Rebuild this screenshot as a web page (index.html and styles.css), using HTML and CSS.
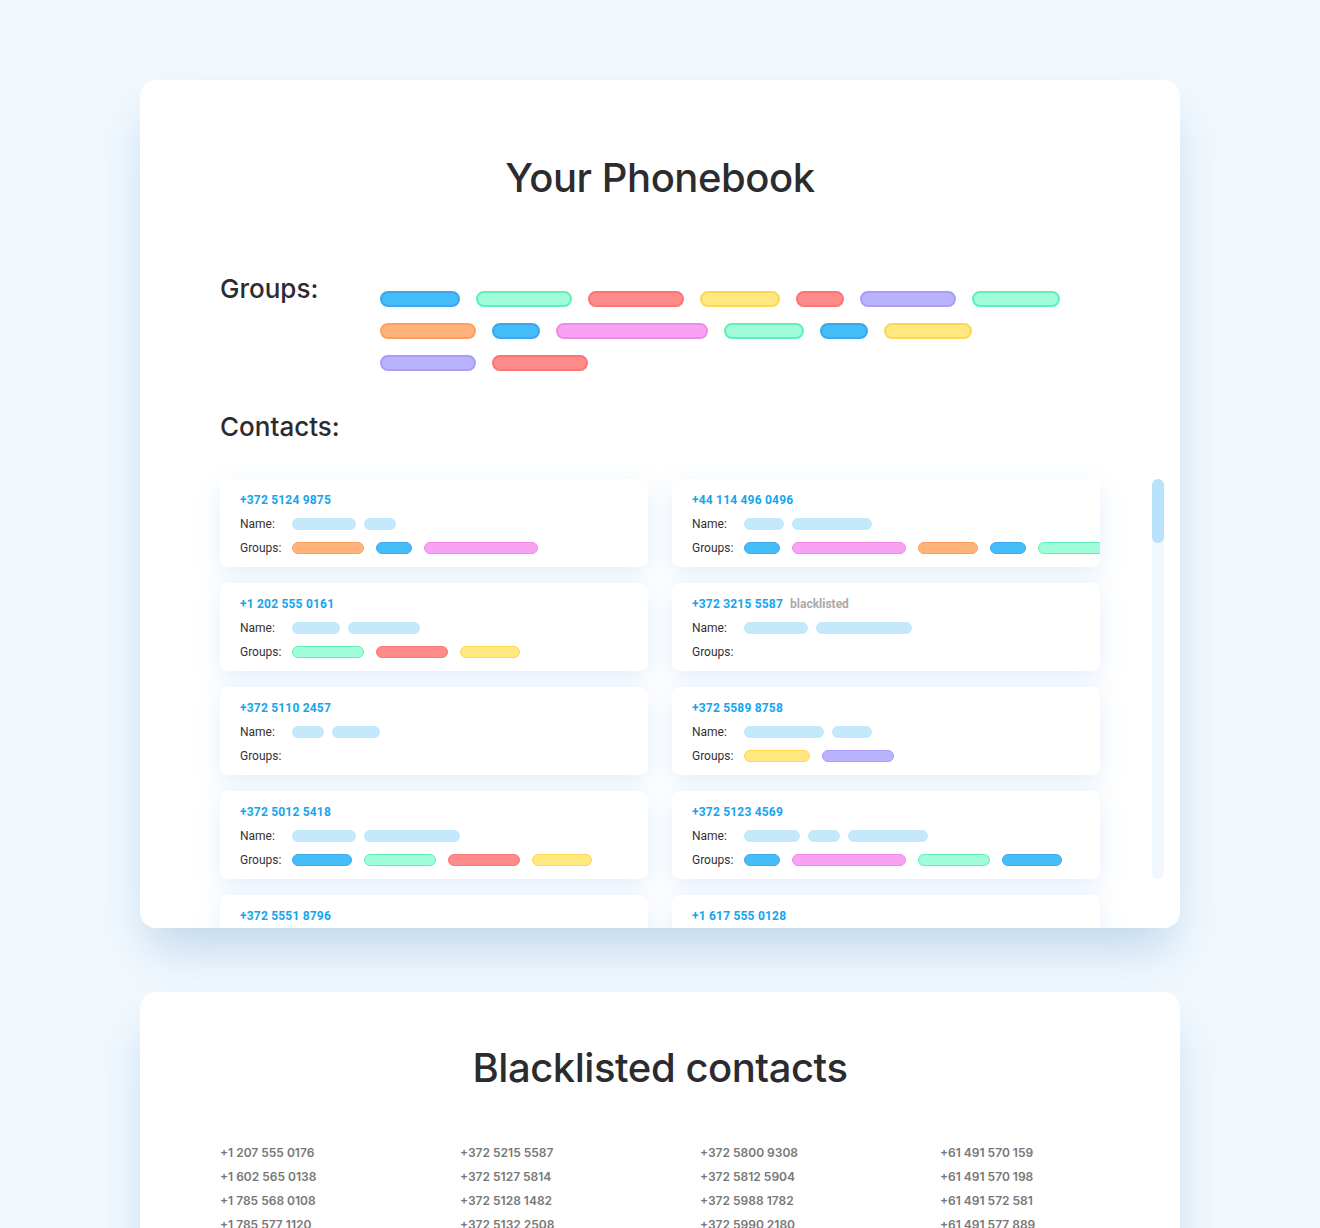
FILE: index.html
```html
<!DOCTYPE html>
<html lang="en">
<head>
<meta charset="utf-8">
<title>Your Phonebook</title>
<link rel="stylesheet" href="styles.css">
</head>
<body>
<main class="page">
  <section class="panel phonebook">
    <h1 class="title">Your Phonebook</h1>

    <div class="groups-section">
      <h2 class="heading">Groups:</h2>
      <div class="group-pills">
        <span class="pill blue" style="width:80px"></span>
        <span class="pill mint" style="width:96px"></span>
        <span class="pill red" style="width:96px"></span>
        <span class="pill yellow" style="width:80px"></span>
        <span class="pill red" style="width:48px"></span>
        <span class="pill purple" style="width:96px"></span>
        <span class="pill mint" style="width:88px"></span>
        <span class="pill orange" style="width:96px"></span>
        <span class="pill blue" style="width:48px"></span>
        <span class="pill pink" style="width:152px"></span>
        <span class="pill mint" style="width:80px"></span>
        <span class="pill blue" style="width:48px"></span>
        <span class="pill yellow" style="width:88px"></span>
        <span class="pill purple" style="width:96px"></span>
        <span class="pill red" style="width:96px"></span>
      </div>
    </div>

    <h2 class="heading contacts-heading">Contacts:</h2>

    <div class="contacts">
      <div class="contact-list">
        <article class="contact">
          <div class="phone">+372 5124 9875</div>
          <div class="row"><span class="label">Name:</span><span class="values"><span class="name-bar" style="width:64px"></span><span class="name-bar" style="width:32px"></span></span></div>
          <div class="row"><span class="label">Groups:</span><span class="values tags"><span class="tag orange" style="width:72px"></span><span class="tag blue" style="width:36px"></span><span class="tag pink" style="width:114px"></span></span></div>
        </article>
        <article class="contact">
          <div class="phone">+44 114 496 0496</div>
          <div class="row"><span class="label">Name:</span><span class="values"><span class="name-bar" style="width:40px"></span><span class="name-bar" style="width:80px"></span></span></div>
          <div class="row"><span class="label">Groups:</span><span class="values tags"><span class="tag blue" style="width:36px"></span><span class="tag pink" style="width:114px"></span><span class="tag orange" style="width:60px"></span><span class="tag blue" style="width:36px"></span><span class="tag mint" style="width:72px"></span></span></div>
        </article>

        <article class="contact">
          <div class="phone">+1 202 555 0161</div>
          <div class="row"><span class="label">Name:</span><span class="values"><span class="name-bar" style="width:48px"></span><span class="name-bar" style="width:72px"></span></span></div>
          <div class="row"><span class="label">Groups:</span><span class="values tags"><span class="tag mint" style="width:72px"></span><span class="tag red" style="width:72px"></span><span class="tag yellow" style="width:60px"></span></span></div>
        </article>
        <article class="contact">
          <div class="phone">+372 3215 5587<span class="flag">blacklisted</span></div>
          <div class="row"><span class="label">Name:</span><span class="values"><span class="name-bar" style="width:64px"></span><span class="name-bar" style="width:96px"></span></span></div>
          <div class="row"><span class="label">Groups:</span><span class="values tags"></span></div>
        </article>

        <article class="contact">
          <div class="phone">+372 5110 2457</div>
          <div class="row"><span class="label">Name:</span><span class="values"><span class="name-bar" style="width:32px"></span><span class="name-bar" style="width:48px"></span></span></div>
          <div class="row"><span class="label">Groups:</span><span class="values tags"></span></div>
        </article>
        <article class="contact">
          <div class="phone">+372 5589 8758</div>
          <div class="row"><span class="label">Name:</span><span class="values"><span class="name-bar" style="width:80px"></span><span class="name-bar" style="width:40px"></span></span></div>
          <div class="row"><span class="label">Groups:</span><span class="values tags"><span class="tag yellow" style="width:66px"></span><span class="tag purple" style="width:72px"></span></span></div>
        </article>

        <article class="contact">
          <div class="phone">+372 5012 5418</div>
          <div class="row"><span class="label">Name:</span><span class="values"><span class="name-bar" style="width:64px"></span><span class="name-bar" style="width:96px"></span></span></div>
          <div class="row"><span class="label">Groups:</span><span class="values tags"><span class="tag blue" style="width:60px"></span><span class="tag mint" style="width:72px"></span><span class="tag red" style="width:72px"></span><span class="tag yellow" style="width:60px"></span></span></div>
        </article>
        <article class="contact">
          <div class="phone">+372 5123 4569</div>
          <div class="row"><span class="label">Name:</span><span class="values"><span class="name-bar" style="width:56px"></span><span class="name-bar" style="width:32px"></span><span class="name-bar" style="width:80px"></span></span></div>
          <div class="row"><span class="label">Groups:</span><span class="values tags"><span class="tag blue" style="width:36px"></span><span class="tag pink" style="width:114px"></span><span class="tag mint" style="width:72px"></span><span class="tag blue" style="width:60px"></span></span></div>
        </article>

        <article class="contact">
          <div class="phone">+372 5551 8796</div>
        </article>
        <article class="contact">
          <div class="phone">+1 617 555 0128</div>
        </article>
      </div>
      <div class="scrollbar"><div class="thumb"></div></div>
    </div>
  </section>

  <section class="panel blacklist">
    <h1 class="title">Blacklisted contacts</h1>
    <div class="black-grid">
      <ul class="black-col">
        <li>+1 207 555 0176</li>
        <li>+1 602 565 0138</li>
        <li>+1 785 568 0108</li>
        <li>+1 785 577 1120</li>
      </ul>
      <ul class="black-col">
        <li>+372 5215 5587</li>
        <li>+372 5127 5814</li>
        <li>+372 5128 1482</li>
        <li>+372 5132 2508</li>
      </ul>
      <ul class="black-col">
        <li>+372 5800 9308</li>
        <li>+372 5812 5904</li>
        <li>+372 5988 1782</li>
        <li>+372 5990 2180</li>
      </ul>
      <ul class="black-col">
        <li>+61 491 570 159</li>
        <li>+61 491 570 198</li>
        <li>+61 491 572 581</li>
        <li>+61 491 577 889</li>
      </ul>
    </div>
  </section>
</main>
</body>
</html>
```

FILE: styles.css
```css
* { box-sizing: border-box; }

html, body {
  margin: 0;
  padding: 0;
}

body {
  background: #f2f9fe;
  font-family: Inter, "Liberation Sans", sans-serif;
  color: #2b2b30;
}

.page {
  padding: 80px 140px 80px;
  display: flex;
  flex-direction: column;
  gap: 64px;
}

.panel {
  background: #ffffff;
  border-radius: 16px;
  box-shadow: 0 28px 50px -8px rgba(80, 140, 195, 0.32);
  padding: 0 80px;
}

.phonebook {
  height: 848px;
  overflow: hidden;
  padding-top: 74px;
}

.title {
  margin: 0;
  font-size: 40px;
  line-height: 48px;
  font-weight: 500;
  text-align: center;
  letter-spacing: -0.45px;
  color: #2b2b30;
}

.heading {
  margin: 0;
  font-size: 26px;
  line-height: 32px;
  font-weight: 500;
  color: #2b2b30;
}

.groups-section {
  margin-top: 71px;
  display: flex;
  align-items: flex-start;
}

.groups-section .heading {
  width: 160px;
  flex: none;
}

.group-pills {
  padding-top: 18px;
  width: 690px;
  display: flex;
  flex-wrap: wrap;
  gap: 16px;
}

.pill {
  display: block;
  height: 16px;
  border-radius: 8px;
  border-width: 2px;
  border-style: solid;
}

.tag {
  display: block;
  flex: none;
  height: 12px;
  border-radius: 6px;
  border-width: 1.5px;
  border-style: solid;
}

.blue   { background: #45bdf8; border-color: #3ca7ef; }
.mint   { background: #a0fcd9; border-color: #5ef2b8; }
.red    { background: #ff8a8a; border-color: #fb7474; }
.yellow { background: #ffe880; border-color: #ffd552; }
.purple { background: #bab3fd; border-color: #a89cf6; }
.orange { background: #ffb37a; border-color: #ff9e5e; }
.pink   { background: #f9a2f3; border-color: #f38ae8; }

.contacts-heading {
  margin-top: 40px;
}

.contacts {
  margin-top: 36px;
  margin-right: -64px;
  display: flex;
  align-items: flex-start;
}

.contact-list {
  width: 880px;
  flex: none;
  display: grid;
  grid-template-columns: 428px 428px;
  column-gap: 24px;
  row-gap: 16px;
}

.contact {
  height: 88px;
  background: #ffffff;
  border-radius: 8px;
  box-shadow: 0 8px 26px rgba(70, 150, 225, 0.15);
  padding: 13px 0 0 20px;
  overflow: hidden;
  font-family: Roboto, "Liberation Sans", sans-serif;
  font-size: 12px;
}

.phone {
  line-height: 16px;
  font-weight: 700;
  color: #17a4ec;
  margin-bottom: 6px;
  white-space: nowrap;
  letter-spacing: 0.2px;
}

.flag {
  color: #aaaaaa;
  margin-left: 7px;
  letter-spacing: 0;
}

.row {
  display: flex;
  align-items: center;
  height: 20px;
  margin-bottom: 4px;
  white-space: nowrap;
}

.label {
  width: 52px;
  flex: none;
  color: #333333;
  font-weight: 400;
}

.values {
  display: flex;
  align-items: center;
  gap: 8px;
}

.values.tags {
  gap: 12px;
}

.name-bar {
  display: block;
  flex: none;
  height: 12px;
  border-radius: 6px;
  background: #c3e8fb;
}

.scrollbar {
  flex: none;
  margin-left: 52px;
  width: 12px;
  height: 400px;
  border-radius: 6px;
  background: #f0f7fe;
}

.thumb {
  height: 64px;
  border-radius: 6px;
  background: #b7e2fa;
}

.blacklist {
  padding-top: 52px;
  padding-bottom: 60px;
}

.black-grid {
  margin-top: 49px;
  display: grid;
  grid-template-columns: repeat(4, 1fr);
  column-gap: 80px;
}

.black-col {
  list-style: none;
  margin: 0;
  padding: 0;
}

.black-col li {
  font-size: 12px;
  line-height: 24px;
  font-weight: 600;
  color: #777777;
  white-space: nowrap;
}
```
